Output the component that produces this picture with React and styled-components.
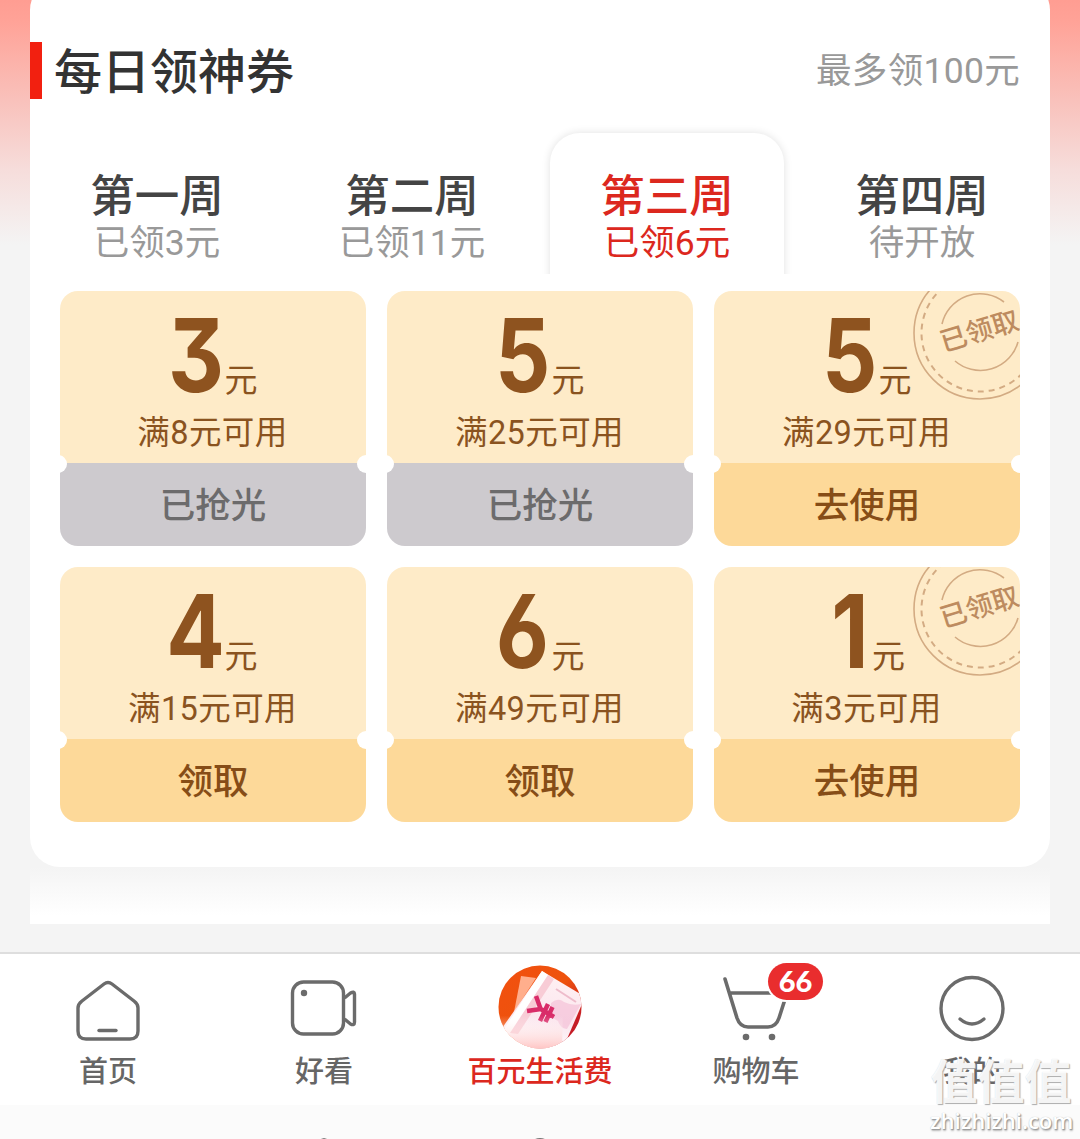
import styled, { createGlobalStyle, css } from "styled-components";

const GlobalStyle = createGlobalStyle`
  * {
    box-sizing: border-box;
  }
  body {
    margin: 0;
    background: #f4f4f4;
    font-family: Roboto, "Noto Sans CJK SC", sans-serif;
  }
`;

const Page = styled.div`
  position: relative;
  display: flex;
  flex-direction: column;
  width: 1080px;
  height: 1139px;
  overflow: hidden;
  background: linear-gradient(180deg, #ff9d92 0, #ffa297 20px, #f9c1bb 100px, #f6dddb 170px, #f4f4f4 245px);
`;

/* The card is scrolled a little past the top edge */
const Card = styled.main`
  height: 887px;
  margin: -20px 30px 0;
  padding-top: 20px;
  background: #fff;
  border-radius: 30px;
`;

const Header = styled.header`
  display: flex;
  align-items: center;
  justify-content: space-between;
  height: 99px;
  padding: 42px 30px 0 0;
`;

const Title = styled.h1`
  display: flex;
  align-items: center;
  height: 57px;
  margin: 0;
  padding: 0 0 5px 12px;
  border-left: 12px solid #f22010;
  font-size: 48px;
  font-weight: 500;
  color: #333;
`;

const Limit = styled.span`
  padding-bottom: 6px;
  font-size: 35.5px;
  letter-spacing: 0.3px;
  color: #999;
`;

const Tabs = styled.nav`
  display: flex;
  justify-content: space-between;
  height: 175px;
  padding: 34px 11px 0 10px;
  overflow: hidden;
`;

const Tab = styled.div`
  display: flex;
  flex-direction: column;
  align-items: center;
  width: 234px;
  height: 150px;
  padding-top: 35px;
  border-radius: 30px 30px 0 0;
  color: #444;
  ${({ $active }) =>
    $active &&
    css`
      color: #dc281e;
      box-shadow: 0 0 9px rgba(0, 0, 0, 0.12);
    `}
`;

const Week = styled.span`
  font-size: 44.5px;
  font-weight: 500;
  line-height: 58px;
`;

const Got = styled.span`
  font-size: 35.5px;
  line-height: 35px;
  color: ${({ $active }) => ($active ? "#dc281e" : "#999")};
`;

const Coupons = styled.section`
  display: grid;
  grid-template-columns: repeat(3, 306px);
  gap: 21px;
  padding: 17px 30px 0;
`;

const Coupon = styled.article`
  position: relative;
  height: 255px;
  border-radius: 18px;
  overflow: hidden;
  color: #8a531f;

  /* the two punched holes on the tear line */
  &::before,
  &::after {
    content: "";
    position: absolute;
    top: 164px;
    width: 18px;
    height: 18px;
    border-radius: 50%;
    background: #fff;
  }
  &::before {
    left: -11px;
  }
  &::after {
    right: -9px;
  }
`;

const CouponTop = styled.div`
  display: flex;
  flex-direction: column;
  align-items: center;
  height: 172px;
  background: #feebc8;
`;

const Amount = styled.div`
  display: flex;
  align-items: baseline;
  justify-content: center;
  height: 120px;
`;

const Digit = styled.span`
  display: inline-block;
  width: ${({ $narrow }) => ($narrow ? "41px" : "54px")};
  text-align: center;
  font-family: Inter, sans-serif;
  font-size: 102px;
  font-weight: 700;
  line-height: 128px;
  font-feature-settings: "cv09" 1, "cv03" 1;
  color: #8e531f;

  span {
    display: inline-block;
    margin: 0 -12px;
    transform: scaleX(0.85);
  }
`;

const Unit = styled.span`
  margin-left: 2px;
  font-size: 33px;
`;

const Rule = styled.p`
  margin: 0;
  padding-right: 1px;
  font-size: 32.5px;
  line-height: 45px;
  letter-spacing: 0.4px;
`;

const Action = styled.button`
  display: block;
  width: 100%;
  height: 83px;
  padding: 0 0 5px;
  border: 0;
  font-family: inherit;
  font-size: 35.5px;
  font-weight: 500;
  color: ${({ $soldOut }) => ($soldOut ? "#6c6b6c" : "#864d17")};
  background: ${({ $soldOut }) => ($soldOut ? "#cdcace" : "#fdd999")};
`;

const StampBox = styled.svg`
  position: absolute;
  top: 0;
  right: 0;
`;

const Strip = styled.div`
  height: 57px;
  margin: 0 30px;
  background: linear-gradient(180deg, #f4f4f4, #fff 85%);
`;

const BottomBar = styled.footer`
  display: flex;
  height: 153px;
  margin-top: 28px;
  border-top: 2px solid #dedede;
  background: #fff;
`;

const NavItem = styled.a`
  position: relative;
  display: flex;
  flex: 1;
  flex-direction: column;
  align-items: center;
  padding-top: 10px;
  font-size: 29px;
  font-weight: 500;
  line-height: 44px;
  color: ${({ $active }) => ($active ? "#dc281e" : "#666")};

  svg {
    display: block;
    height: 86px;
  }
`;

const Badge = styled.span`
  position: absolute;
  top: 9px;
  left: 120px;
  width: 55px;
  height: 37px;
  border-radius: 19px;
  background: #e92d2e;
  box-shadow: 0 0 0 2px #fff;
  color: #fff;
  font-family: Lato, sans-serif;
  font-size: 29px;
  font-weight: 900;
  line-height: 36px;
  text-align: center;
`;

const SystemBar = styled.div`
  flex: 1;
  background: #fbfbfb;

  svg {
    display: block;
  }
`;

const Watermark = styled.div`
  position: absolute;
  right: 8px;
  bottom: 3px;
  width: 142px;
  text-align: center;
`;

const WatermarkName = styled.div`
  color: rgba(255, 255, 255, 0.9);
  font-size: 47px;
  font-weight: 700;
  line-height: 44px;
  white-space: nowrap;
  text-shadow: 1px 1px 1px #aaa, 0 0 1px #ddd;
`;

const WatermarkUrl = styled.div`
  color: #fff;
  font-family: "Open Sans", sans-serif;
  font-size: 22px;
  font-weight: 600;
  line-height: 31px;
  text-shadow: 1px 1px 1px #999, 1px 2px 2px #bbb, 0 0 1px #bbb;
`;

const weeks = [
  { name: "第一周", got: "已领3元" },
  { name: "第二周", got: "已领11元" },
  { name: "第三周", got: "已领6元", active: true },
  { name: "第四周", got: "待开放" },
];

const coupons = [
  { amount: 3, rule: "满8元可用", action: "已抢光", soldOut: true },
  { amount: 5, rule: "满25元可用", action: "已抢光", soldOut: true },
  { amount: 5, rule: "满29元可用", action: "去使用", taken: true },
  { amount: 4, rule: "满15元可用", action: "领取" },
  { amount: 6, rule: "满49元可用", action: "领取" },
  { amount: 1, rule: "满3元可用", action: "去使用", taken: true },
];

const Stamp = () => (
  <StampBox width="110" height="112" viewBox="0 0 110 112" fill="none" stroke="#d3ab83" strokeWidth="1.6">
    <circle cx="70" cy="42" r="66" />
    <circle cx="70" cy="42" r="58.5" strokeWidth="2" strokeDasharray="6 5" />
    <path d="M32 33A39 39 0 0 1 94 11M45 70A39 39 0 0 0 108 51" />
    <text
      x="70"
      y="49.5"
      transform="rotate(-17 70 42)"
      textAnchor="middle"
      fontSize="27"
      fontWeight="500"
      fill="#bd8b5f"
      stroke="none"
    >
      已领取
    </text>
  </StampBox>
);

const HomeIcon = () => (
  <svg width="80" viewBox="0 0 80 86" fill="none" stroke="#6b6b6b" strokeWidth="3.4" strokeLinecap="round" strokeLinejoin="round">
    <path d="M36 20q4-3 8 0l22 17q4 3 4 7V67q0 8-8 8H18q-8 0-8-8V44q0-4 4-7z" />
    <path d="M31 66.500h17" />
  </svg>
);

const VideoIcon = () => (
  <svg width="80" viewBox="0 0 80 86" fill="none" stroke="#6b6b6b" strokeWidth="3.4" strokeLinejoin="round">
    <rect x="8.500" y="18" width="51" height="52" rx="11" />
    <path d="M60.500 34l6-5q4-2 4 1v28q0 4-4 2l-6-5" />
    <circle cx="20" cy="29" r="3.200" fill="#6b6b6b" stroke="none" />
  </svg>
);

const LivingIcon = () => (
  <svg width="84" viewBox="0 0 84 86">
    <defs>
      <linearGradient id="disc" x1="0" x2="1" y1="0" y2="1">
        <stop offset="0" stopColor="#f2500f" />
        <stop offset="0.5" stopColor="#ee520d" />
        <stop offset="0.8" stopColor="#c51c26" />
      </linearGradient>
      <linearGradient id="paper" x1="0.6" x2="0.4" y1="0" y2="1">
        <stop offset="0" stopColor="#fff1f3" />
        <stop offset="0.6" stopColor="#fbe6ee" />
        <stop offset="1" stopColor="#fff" />
      </linearGradient>
      <linearGradient id="glow" x1="0" x2="0" y1="0" y2="1">
        <stop offset="0.6" stopColor="#fff" stopOpacity="0" />
        <stop offset="1" stopColor="#ffc0bf" />
      </linearGradient>
      <clipPath id="round">
        <circle cx="42" cy="43" r="41.500" />
      </clipPath>
    </defs>
    <g clipPath="url(#round)">
      <path fill="url(#disc)" d="M0 0h84v86H0z" />
      <path fill="#ffae8c" d="M23 12l15 2-22 34z" />
      <path fill="url(#paper)" d="M44 7l40 24v9L69 75 60 86H0V70z" />
      <path fill="#fff" d="M44 7l6 4L12 70l-8-2z" />
      <path fill="#f8ccd6" d="M50 11l6 4-36 55-8-1z" />
      <path fill="#f3bad3" opacity=".6" d="M53 39q7-6 13-1 8 4 17 2L69 65q-7-1-9-8-9-3-7-18z" />
      <path stroke="#eebccb" strokeWidth="2" d="M58 25l20 13" />
      <g stroke="#d92c69" strokeWidth="4.500" fill="none">
        <path d="M38 32l5 14M29 47l14-2M41 44l15 9M50 40l-8 17M54.500 43l-7 15" />
      </g>
      <path fill="url(#glow)" d="M0 0h66l-2 86H0z" />
    </g>
  </svg>
);

const CartIcon = () => (
  <svg width="80" viewBox="0 0 80 86" fill="none" stroke="#6b6b6b" strokeWidth="3.600" strokeLinecap="round">
    <path d="M9 15l12 39q3 9 11 9h20q8 0 11-9l8-25M14 29h43" />
    <circle cx="30" cy="73" r="3.300" fill="#6b6b6b" stroke="none" />
    <circle cx="56" cy="73" r="3.300" fill="#6b6b6b" stroke="none" />
  </svg>
);

const FaceIcon = () => (
  <svg width="80" viewBox="0 0 80 86" fill="none" stroke="#6b6b6b" strokeWidth="3.400" strokeLinecap="round">
    <circle cx="40" cy="44.500" r="31" />
    <path d="M28 55q12 10 24 0" />
  </svg>
);

export default function App() {
  return (
    <Page>
      <GlobalStyle />
      <Card>
        <Header>
          <Title>每日领神券</Title>
          <Limit>最多领100元</Limit>
        </Header>
        <Tabs>
          {weeks.map((week) => (
            <Tab key={week.name} $active={week.active}>
              <Week>{week.name}</Week>
              <Got $active={week.active}>{week.got}</Got>
            </Tab>
          ))}
        </Tabs>
        <Coupons>
          {coupons.map((coupon) => (
            <Coupon key={coupon.rule}>
              <CouponTop>
                <Amount>
                  <Digit $narrow={coupon.amount === 1}>
                    <span>{coupon.amount}</span>
                  </Digit>
                  <Unit>元</Unit>
                </Amount>
                <Rule>{coupon.rule}</Rule>
              </CouponTop>
              <Action $soldOut={coupon.soldOut}>{coupon.action}</Action>
              {coupon.taken && <Stamp />}
            </Coupon>
          ))}
        </Coupons>
      </Card>
      <Strip />
      <BottomBar>
        <NavItem>
          <HomeIcon />
          首页
        </NavItem>
        <NavItem>
          <VideoIcon />
          好看
        </NavItem>
        <NavItem $active>
          <LivingIcon />
          百元生活费
        </NavItem>
        <NavItem>
          <CartIcon />
          <Badge>66</Badge>
          购物车
        </NavItem>
        <NavItem>
          <FaceIcon />
          我的
        </NavItem>
      </BottomBar>
      <SystemBar>
        <svg width="1080" height="34" fill="none" stroke="#777" strokeWidth="2">
          <circle cx="540" cy="45" r="11" />
          <path d="M321 35l3-1 3 1" />
        </svg>
      </SystemBar>
      <Watermark>
        <WatermarkName>值值值</WatermarkName>
        <WatermarkUrl>zhizhizhi.com</WatermarkUrl>
      </Watermark>
    </Page>
  );
}
